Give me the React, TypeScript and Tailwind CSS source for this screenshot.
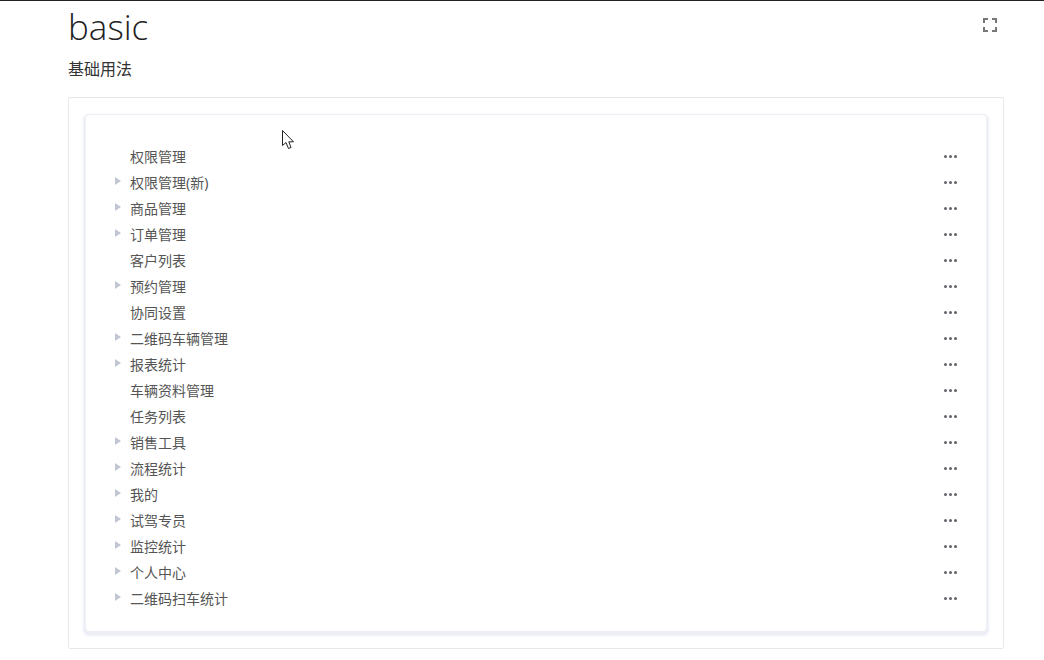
import React from 'react';

interface TreeRow {
  label: string;
  hasChildren: boolean;
}

const rows: TreeRow[] = [
  { label: '权限管理', hasChildren: false },
  { label: '权限管理(新)', hasChildren: true },
  { label: '商品管理', hasChildren: true },
  { label: '订单管理', hasChildren: true },
  { label: '客户列表', hasChildren: false },
  { label: '预约管理', hasChildren: true },
  { label: '协同设置', hasChildren: false },
  { label: '二维码车辆管理', hasChildren: true },
  { label: '报表统计', hasChildren: true },
  { label: '车辆资料管理', hasChildren: false },
  { label: '任务列表', hasChildren: false },
  { label: '销售工具', hasChildren: true },
  { label: '流程统计', hasChildren: true },
  { label: '我的', hasChildren: true },
  { label: '试驾专员', hasChildren: true },
  { label: '监控统计', hasChildren: true },
  { label: '个人中心', hasChildren: true },
  { label: '二维码扫车统计', hasChildren: true },
];

const FullscreenIcon = () => (
  <svg width="16" height="16" viewBox="0 0 16 16" fill="none" stroke="#777777" strokeWidth="2">
    <path d="M2 6V2h4M10 2h4v4M14 10v4h-4M6 14H2v-4" />
  </svg>
);

const Dots = () => (
  <svg width="13" height="3" viewBox="0 0 13 3" fill="#5f6368">
    <circle cx="1.5" cy="1.5" r="1.5" />
    <circle cx="6.5" cy="1.5" r="1.5" />
    <circle cx="11.5" cy="1.5" r="1.5" />
  </svg>
);

const Caret = () => (
  <svg width="6" height="8" viewBox="0 0 6 8" fill="#c0c6d2">
    <path d="M0 0l6 4-6 4z" />
  </svg>
);

const Cursor = () => (
  <svg
    className="absolute left-[282px] top-[129px]"
    width="14"
    height="20"
    viewBox="0 0 14 20"
    fill="#ffffff"
    stroke="#222222"
    strokeWidth="1"
  >
    <path d="M0.5 0.5V15.5L4 12.5L6.5 18.5L9 17.5L6.8 11.8H11.5Z" />
  </svg>
);

const Row = ({ label, hasChildren }: TreeRow) => (
  <div className="flex h-[26px] items-center">
    <div className="flex w-[44px] shrink-0 justify-end pr-[9px] pb-[2px]">
      {hasChildren && <Caret />}
    </div>
    <span className="flex-1 text-[14px] text-[#555555]">{label}</span>
    <div className="mr-[29px] flex items-center">
      <Dots />
    </div>
  </div>
);

export default function App() {
  return (
    <div className="relative h-[660px] w-[1044px] overflow-hidden border-t border-[#222222] bg-white font-['Noto_Sans','Noto_Sans_CJK_SC',sans-serif]">
      <div className="ml-[68px] w-[936px]">
        <div className="flex h-[54px] items-start justify-between">
          <h1 className="font-['Open_Sans',sans-serif] text-[35px] leading-[52px] font-light text-[#222222]">
            basic
          </h1>
          <div className="mt-[16px] mr-[6px]">
            <FullscreenIcon />
          </div>
        </div>
        <p className="mt-[2px] h-[28px] text-[16px] leading-[24px] text-[#333333]">基础用法</p>
        <div className="mt-[12px] h-[552px] rounded-[2px] border border-[#e8e8ec] p-[16px]">
          <div className="h-[518px] rounded-[4px] border border-[#eeeef6] bg-white pt-[28px] shadow-[0_2px_2px_2px_rgba(225,227,238,0.6)]">
            {rows.map((row) => (
              <Row key={row.label} {...row} />
            ))}
          </div>
        </div>
      </div>
      <Cursor />
    </div>
  );
}
